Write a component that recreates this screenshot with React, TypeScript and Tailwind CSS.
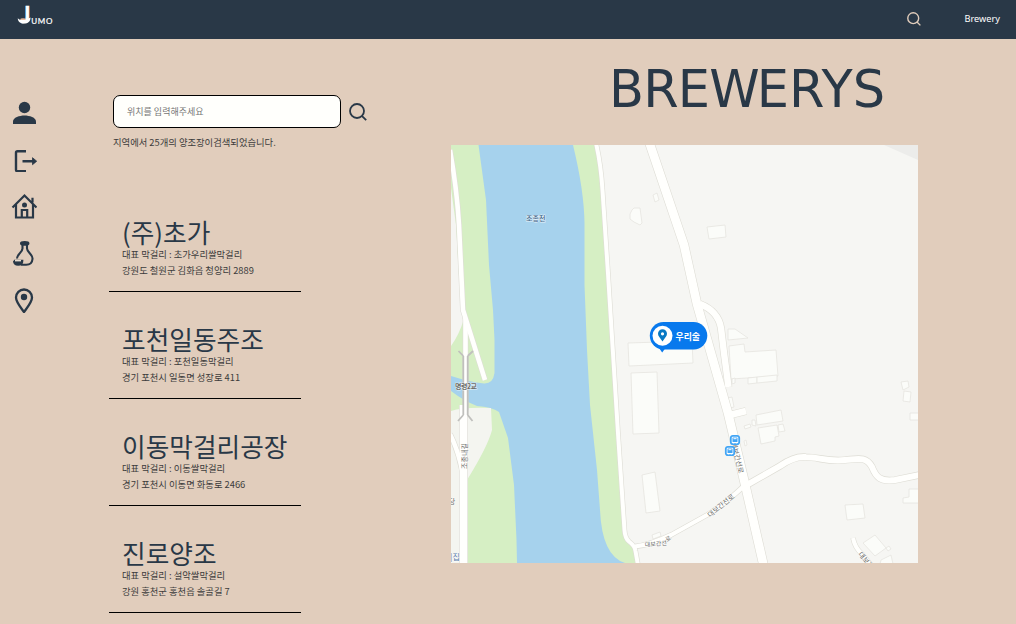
import React from "react";

const breweries = [
  { name: "(주)초가", drink: "초가우리쌀막걸리", address: "강원도 철원군 김화읍 청양리 2889" },
  { name: "포천일동주조", drink: "포천일동막걸리", address: "경기 포천시 일동면 성장로 411" },
  { name: "이동막걸리공장", drink: "이동쌀막걸리", address: "경기 포천시 이동면 화동로 2466" },
  { name: "진로양조", drink: "설악쌀막걸리", address: "강원 홍천군 홍천읍 솔골길 7" },
];

function SearchIcon({ className }: { className: string }) {
  return (
    <svg viewBox="0 0 18 18" className={className} fill="none" stroke="currentColor" strokeWidth="1.8">
      <circle cx="8" cy="8" r="7" />
      <path d="M12.8 12.8 17.2 17.2" />
    </svg>
  );
}

function Logo() {
  return (
    <svg viewBox="0 0 40 24" className="h-6 w-10 overflow-visible" fill="#fff">
      <path d="M1.800 14.300Q3 15.800 5 15.800L10 15.500L14.500 13.500C14.500 17.500 12 19.600 8 19.600C4.500 19.600 1.800 17.600 1.800 14.300Z" />
      <text x="4.900" y="18.800" fontSize="22" stroke="#fff" strokeWidth=".5" className="font-[Lato] font-bold">J</text>
      <ellipse cx="7" cy="15.200" rx="2.800" ry=".9" fill="#e8b99c" />
      <text x="15.200" y="19.600" fontSize="8" stroke="#fff" strokeWidth=".2" textLength="21.300" className="font-[Lato]">UMO</text>
    </svg>
  );
}

function Sidebar() {
  return (
    <aside className="flex w-[109px] shrink-0 flex-col gap-[21px] pl-[11px] pt-[60px] text-[#293847]">
      <svg viewBox="0 0 26 26" className="size-[26px]" fill="currentColor">
        <circle cx="13.500" cy="8.500" r="5.700" />
        <path d="M2 25v-2.500c0-4 6.500-6 11.500-6s11.500 2 11.500 6V25z" />
      </svg>
      <svg viewBox="0 0 26 26" className="size-[26px]" fill="none" stroke="currentColor" strokeWidth="2.400">
        <path d="M15 5.200H6.500q-1.500 0-1.500 1.500v17q0 1.500 1.500 1.500H15M11.500 15.200H24" />
        <path d="m21.500 11.700 4.200 3.500-4.200 3.500z" fill="currentColor" strokeWidth="0.800" />
      </svg>
      <svg viewBox="0 0 26 26" className="size-[26px]" fill="none" stroke="currentColor" strokeWidth="2.200">
        <path d="M1.500 14.500 13.500 2.500 25.500 14.500M5 11.500v13h17V11.500M21.500 9.500V4.800M10.800 24v-7h5.400V24" />
        <circle cx="13.500" cy="12" r="2.500" fill="currentColor" stroke="none" />
      </svg>
      <svg viewBox="0 0 26 26" className="size-[26px]" fill="none" stroke="currentColor" strokeWidth="2.100">
        <path d="M11.500 4.500v4c0 3.500-5.500 6-5.500 10M16 4.500v4c0 3.500 6 6 5.500 10.500-.3 3.700-3 5.800-6.300 5.800H10" />
        <ellipse cx="13.700" cy="3.400" rx="3.700" ry="1.300" fill="currentColor" />
        <path d="M3 20.700h8.300q0 4-4.100 4t-4.200-4" fill="currentColor" />
        <path d="M4 20.600h6" stroke="#e8ddd0" strokeWidth="1.600" />
      </svg>
      <svg viewBox="0 0 26 26" className="size-[26px]" fill="none" stroke="currentColor" strokeWidth="2.300">
        <path d="M13 25C9 19.500 5 15 5 10.500a8 8 0 0 1 16 0c0 4.500-4 9-8 14.500Z" />
        <circle cx="13" cy="10" r="3.200" fill="currentColor" stroke="none" />
      </svg>
    </aside>
  );
}

const roads = [
  { d: "M450 150Q457 190 459 225L463 310L485 380", w: 4.6 },
  { d: "M465.500 318V410", w: 4.6 },
  { d: "M463.500 405V565", w: 7.6 },
  { d: "M450 434Q458 450 462 470", w: 4.5 },
  { d: "M596 143Q601 165 602.500 190L608 273L613 353L618 433L624.500 530Q625 538 629 541.500Q635 546 635.500 551L638 565", w: 4 },
  { d: "M635 546.500Q650 545 671 535L707 515Q725 504 746 484", w: 4.2 },
  { d: "M745 486L780 466Q794 456 806 457C818 457 828 462 845 460C858 459 866 456 872 467C876 477 880 482 895 480L919 475", w: 6 },
  { d: "M700 304Q718 311 721 328L724 353L728.500 387", w: 6.4 },
  { d: "M730 415L746 411", w: 6.5 },
  { d: "M649.500 143L684 245L697 304L728 413L745 484L763.500 565", w: 8.6 },
  { d: "M853 538Q855 548 862 554L872 566", w: 4 },
];

const buildings = [
  "632 210 634 208 640 208 642 223 640 225 634 222 630 219 630 214",
  "653 195 657 193 659 200 655 202",
  "707 227 725 225 726 237 709 239",
  "628 343 692 341 693 363 629 366",
  "631 373 657 372 659 433 633 434",
  "642 475 655 472 660 511 646 513",
  "652 535 660 532 661 536 653 539",
  "728 329 735 329 748 338 728 340",
  "729 346 744 344 745 352 776 350 778 376 731 379",
  "748 378 757 377 757 383 748 384",
  "757 377 777 375 777 381 757 383",
  "732 379 735 378 735 383 732 384",
  "728 398 732 397 734 407 730 408",
  "744 426 750 424 751 427 745 429",
  "752 420 755 420 756 426 752 425",
  "756 415 781 410 783 421 757 425",
  "758 428 777 425 779 436 775 437 775 441 761 444",
  "778 425 783 424 785 431 779 432",
  "744 441 746 440 747 445 745 446",
  "901 382 908 381 909 387 903 390",
  "904 391 911 392 910 402 903 401",
  "910 413 919 413 919 420 910 420",
  "909 489 919 489 919 503 903 503 903 498 909 497",
  "845 505 863 504 865 518 847 520",
  "863 543 875 535 886 548 875 556",
  "881 560 891 555 893 564 880 564",
  "886 548 889 546 891 549 888 551",
];

function BusStop({ x, y }: { x: number; y: number }) {
  return (
    <g transform={`translate(${x} ${y})`}>
      <rect x="-4.200" y="-4.200" width="8.400" height="8.400" rx="2" fill="#fff" stroke="#42a5f5" strokeWidth="1.800" />
      <rect x="-2.500" y="-2.500" width="5" height="4.500" rx=".5" fill="#42a5f5" />
      <path d="M-1.500-1.300h3M-2 2.800h1M1 2.800h1" stroke="#fff" />
    </g>
  );
}

function BreweryMap() {
  return (
    <div className="relative h-[418px] w-[467px] overflow-hidden">
      <svg viewBox="451 145 467 418" className="block size-full font-['Noto_Sans_CJK_KR',sans-serif]">
        <rect x="451" y="145" width="467" height="418" fill="#f6f6f3" />
        <path d="M884 145L918 160V145Z" fill="#ececea" />
        <path d="M451 145H595L602 190L608 273L613 353L624 530L636 550V563H451Z" fill="#d6efc4" />
        <path d="M478.500 145H573Q584 190 584.500 223V285L587 350L590 405L597 470L600 510Q602 556 625 563H517L516.500 540L514 485L508 438L499 412Q492 407 477 406Q464 401 451 391V376Q470 382 484 383.500Q493 384 494.500 373V340L493 310L489 265L486 200Z" fill="#a6d2ed" />
        <path d="M451 188L456 225L461 310L464 319Q459 335 451 346Z" fill="#f5f5f2" />
        <path d="M451 411Q463 407 491 408L492 430Q488 446 467 480V563H451Z" fill="#f4f5f0" />
        <g fill="#fbfcf9" stroke="#e6e5df" strokeWidth=".8">
          {buildings.map((points) => <polygon key={points} points={points} />)}
        </g>
        <g fill="none" strokeLinejoin="round">
          {roads.map((road) => <path key={road.d} d={road.d} stroke="#deddd5" strokeWidth={road.w + 1.2} />)}
          {roads.map((road) => <path key={road.d} d={road.d} stroke="#fffffd" strokeWidth={road.w} />)}
        </g>
        <g fill="none" strokeWidth="1.800" stroke="#c0c0bd">
          <path d="M463.300 356V415M467.700 356V415M458.500 351L463.300 356M473 351L467.700 356M458 421L463.300 415M472.500 421L467.700 415" />
        </g>
        <g fontSize="7" fill="#6c6c69" stroke="#ffffff" strokeOpacity=".7" strokeWidth="1" paintOrder="stroke" textAnchor="middle">
          <text x="535.700" y="221" fill="#3f6488" fontWeight="500">조종천</text>
          <text x="466" y="388.500" fontSize="7" fontWeight="700" textLength="22">명령2교</text>
          <text transform="translate(466.500 456) rotate(-90)">조종내길</text>
          <text x="452" y="504">당</text>
          <text x="455" y="560" fontSize="8" fill="#5b7fab">|집</text>
          <text transform="translate(722.500 507.500) rotate(-39)" fontSize="7">대보간선로</text>
          <text transform="translate(656 546) rotate(-5)" fontSize="6">대보간선</text>
          <text transform="translate(669.500 540.500) rotate(-35)" fontSize="6">로</text>
          <text transform="translate(735 458) rotate(76)">대보간선로</text>
          <text transform="translate(864 562) rotate(50)">대보간</text>
        </g>
        <BusStop x={735} y={440} />
        <BusStop x={730} y={451} />
        <rect x="649.800" y="322" width="57.500" height="27.500" rx="13.700" fill="#0879ed" />
        <path d="M659 348H665.500L662.200 352.500Z" fill="#0879ed" />
        <circle cx="662.500" cy="335.700" r="10" fill="#fff" />
        <path fillRule="evenodd" d="M662.500 341.500C660 338 658 336 658 333.800A4.500 4.500 0 0 1 667 333.800C667 336 665 338 662.500 341.500ZM662.500 332.200A1.600 1.600 0 1 0 662.500 335.400A1.600 1.600 0 0 0 662.500 332.200Z" fill="#0879c4" />
        <text x="675.500" y="339.600" fontSize="8.900" fontWeight="700" fill="#fff">우리술</text>
      </svg>
    </div>
  );
}

export default function App() {
  return (
    <div className="flex h-[624px] w-[1016px] flex-col overflow-hidden bg-[#e1cdbc] font-['Noto_Sans_CJK_KR',sans-serif] text-[#293847]">
      <header className="flex h-[39px] shrink-0 items-center bg-[#293847] px-4 pb-px">
        <div className="mb-[7px]"><Logo /></div>
        <SearchIcon className="ml-auto mr-[44px] size-[14px] text-[#e1cdbc]" />
        <a className="font-['Noto_Sans'] text-[9.2px] text-white">Brewery</a>
      </header>
      <main className="flex min-h-0 flex-1">
        <Sidebar />
        <section className="flex w-[342px] shrink-0 flex-col pt-14">
          <form className="ml-1 flex items-center">
            <input
              placeholder="위치를 입력해주세요"
              className="h-[33px] w-[228px] rounded-[7px] border border-black bg-[#fffffc] px-[13px] text-[9px] outline-none placeholder:text-[#757575]"
            />
            <SearchIcon className="ml-[8px] size-[18px]" />
          </form>
          <p className="ml-1 mt-[6px] text-[9.32px] leading-4 text-[#3b3b3b]">지역에서 25개의 양조장이검색되었습니다.</p>
          <ul className="mt-[35px] w-[192px]">
            {breweries.map((b) => (
              <li key={b.name} className="flex h-[107px] flex-col justify-end border-b border-black pb-[13px] pl-[13px]">
                <h2 className="whitespace-nowrap text-[25.7px] leading-[29px]">{b.name}</h2>
                <p className="text-[9.32px] leading-4 text-[#3b3b3b]">대표 막걸리 : {b.drink}</p>
                <p className="text-[9.32px] leading-4 text-[#3b3b3b]">{b.address}</p>
              </li>
            ))}
          </ul>
        </section>
        <section className="flex w-[467px] flex-col">
          <h1 className="flex h-[106px] items-center pb-[6px] pl-[158px] font-['DejaVu_Sans'] text-[51px] leading-none tracking-[-0.8px]">
            <span>BRE<span className="tracking-[-3px]">W</span><span className="tracking-[0.2px]">ERYS</span></span>
          </h1>
          <BreweryMap />
        </section>
      </main>
    </div>
  );
}
